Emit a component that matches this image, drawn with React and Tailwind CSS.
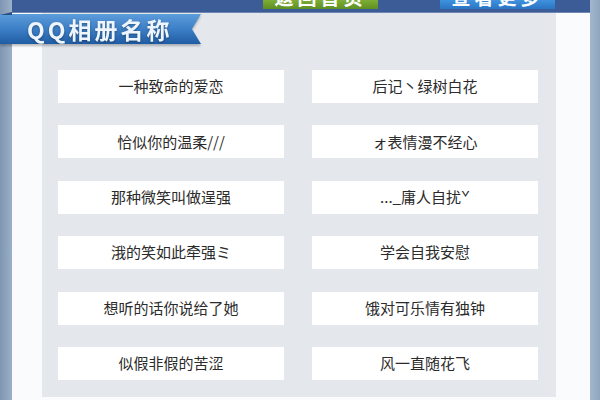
import React from 'react'

const names = [
  '一种致命的爱恋', '后记丶绿树白花',
  '恰似你的温柔///', 'ォ表情漫不经心',
  '那种微笑叫做逞强', '..._庸人自扰ˇ',
  '涐的笑如此牵强ミ', '学会自我安慰',
  '想听的话你说给了她', '饿对可乐情有独钟',
  '似假非假的苦涩', '风一直随花飞',
]

function TopButton({ label, className }) {
  return (
    <div className={`h-[9px] overflow-hidden flex justify-center ${className}`}>
      <span className="mt-[-13px] text-[19px] leading-[20px] font-bold text-white tracking-[4px]">{label}</span>
    </div>
  )
}

function App() {
  return (
    <div
      className="relative w-[600px] h-[400px] flex bg-[#93a8c2] overflow-hidden"
      style={{ fontFamily: '"Noto Sans CJK SC", "Noto Sans", sans-serif' }}
    >
      <div className="w-[12px] bg-gradient-to-r from-[#7f96b3] to-[#9bb0c8]" />

      <div className="w-[578px] flex flex-col">
        {/* top bar */}
        <div className="h-[13px] flex bg-[#3c5c97] border-b border-[#6f87b0]">
          <div className="w-[251px]" />
          <TopButton label="返回首页" className="w-[115px] bg-gradient-to-b from-[#7fae36] to-[#5d8f22]" />
          <div className="w-[62px]" />
          <TopButton label="查看更多" className="w-[115px] bg-gradient-to-b from-[#3f92de] to-[#2a74c4]" />
        </div>

        {/* body */}
        <div className="flex-1 flex bg-[#fafbfc]">
          <div className="w-[30px]" />
          <div className="w-[514px] h-[384px] bg-[#e4e8ed] pt-[57px] pl-[16px] pr-[18px]">
            <div className="grid grid-cols-2 gap-x-[28px] gap-y-[22.4px]">
              {names.map((n, i) => (
                <div
                  key={i}
                  className="h-[33px] bg-white flex items-center justify-center text-[15px] text-[#2b2b2b]"
                >
                  {n}
                </div>
              ))}
            </div>
          </div>
        </div>
      </div>

      <div className="w-[10px] bg-gradient-to-r from-[#a3b6cd] to-[#8fa5c0]" />

      {/* ribbon title */}
      <div className="absolute left-0 top-[14px] w-[201px] h-[30px] drop-shadow-[0_2px_1px_rgba(0,0,0,0.25)]">
        <div className="w-full h-full bg-gradient-to-b from-[#5b9cdb] via-[#3d7fc6] to-[#1f5ca3] [clip-path:polygon(0_0,100%_0,95.5%_50%,100%_100%,0_100%)] flex items-center pl-[27px]">
          <span className="text-[23px] font-bold text-[#eef5fc] tracking-[3px] leading-none drop-shadow-[0_1px_1px_rgba(0,0,0,0.35)]">
            QQ相册名称
          </span>
        </div>
      </div>
      <div className="absolute left-0 top-[12px] w-[12px] h-[3px] bg-[#2a4f86] [clip-path:polygon(0_100%,100%_0,100%_100%)]" />
    </div>
  )
}

export default App
